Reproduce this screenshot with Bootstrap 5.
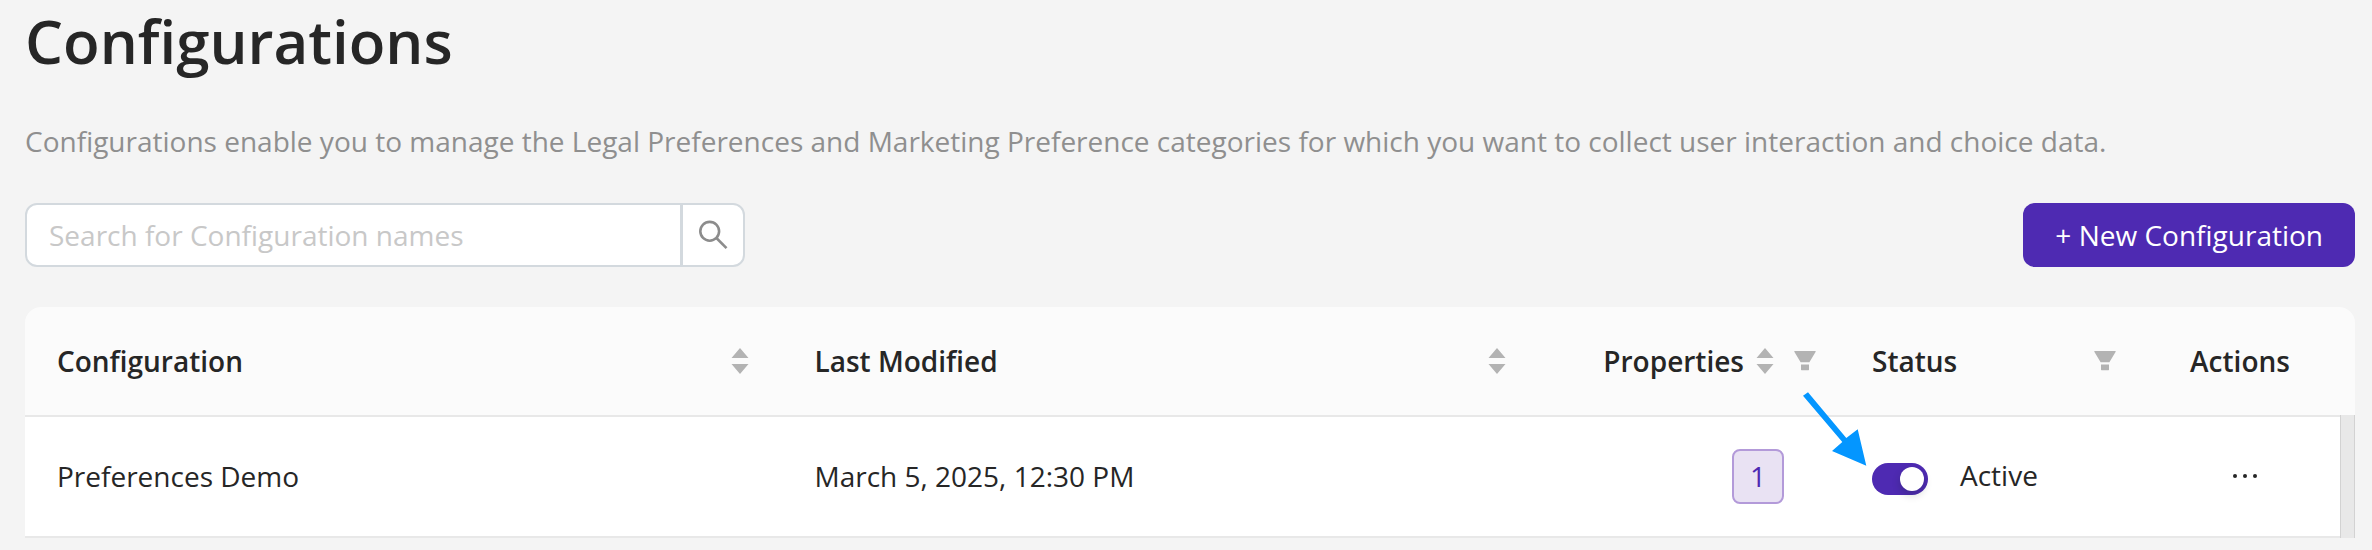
<!DOCTYPE html>
<html lang="en">
<head>
<meta charset="utf-8">
<meta name="viewport" content="width=device-width, initial-scale=1">
<title>Configurations</title>
<link href="https://cdn.jsdelivr.net/npm/bootstrap@5.3.0/dist/css/bootstrap.min.css" rel="stylesheet">
<style>
  body {
    background: #f4f4f4;
    color: #262626;
    font-family: "Open Sans", sans-serif;
    font-size: 28px;
    line-height: 44px;
  }
  .page { padding: 0 17px 12px 25px; }
  .page-title { font-size: 60px; line-height: 82px; font-weight: 600; margin: 0 0 37px; }
  .intro { color: #8f8f8f; margin: 0 0 40px; }
  .toolbar { margin-bottom: 40px; }

  .search-box { width: 720px; max-width: 100%; }
  .search-box .form-control,
  .search-box .btn {
    height: 64px;
    border: 2px solid #d3d9de;
    border-radius: 12px;
    background: #fff;
    color: #262626;
    font-size: 28px;
    line-height: 44px;
  }
  .search-box .form-control { padding: 8px 22px; }
  .search-box .form-control::placeholder { color: #c8c8c8; }
  .search-box .btn { width: 64px; padding: 0; color: #8c8c8c; }
  .btn-create {
    --bs-btn-color: #fff;
    --bs-btn-bg: #4e2ab2;
    --bs-btn-hover-color: #fff;
    --bs-btn-hover-bg: #5f3cc2;
    font-size: 28px;
    line-height: 44px;
    padding: 10px 32px;
    border: 0;
    border-radius: 12px;
  }

  .grid-wrap { border-radius: 16px 16px 0 0; overflow: hidden; }
  .config-table { --bs-table-bg: #fff; table-layout: fixed; color: #262626; margin: 0; }
  .config-table th,
  .config-table td { padding: 32px; border-bottom: 2px solid #e8e8e8; color: #262626; vertical-align: middle; }
  .config-table th { background: #fbfbfb; font-weight: 600; }
  .config-table td { padding-bottom: 34px; }
  .w-status { width: 300px; }
  .w-actions { width: 200px; }
  .config-table .th-sort { padding-right: 34px; }
  .config-table .th-filter { padding-right: 24px; }
  .config-table .td-props { padding: 32px 56px 32px 32px; }
  .config-table .td-actions { padding-left: 42px; }
  .icon-btn { padding: 0; border: 0; line-height: 0; color: #b3b3b3; background: none; }

  .count-tag {
    display: block;
    width: 52px;
    height: 55px;
    line-height: 51px;
    margin-left: auto;
    text-align: center;
    border: 2px solid #b39ad9;
    border-radius: 8px;
    background: #e9e2f3;
    color: #4e2ab2;
    text-decoration: none;
  }
  .status-switch { padding: 0; min-height: 0; gap: 32px; }
  .status-switch .form-check-input {
    appearance: none;
    width: 56px;
    height: 32px;
    margin: 8px 0 0;
    border: 0;
    border-radius: 16px;
    background: #4e2ab2;
    display: flex;
    align-items: center;
    justify-content: flex-end;
    padding: 4px;
  }
  .status-switch .form-check-input::before {
    content: "";
    width: 24px;
    height: 24px;
    border-radius: 12px;
    background: #fff;
    box-shadow: 0 4px 8px rgba(0, 35, 11, .2);
  }
  .pointer-arrow { position: absolute; left: -37px; top: -25px; z-index: 2; pointer-events: none; }
  .more-btn { color: #262626; }

  .rail { width: 15px; }
  .rail-head { height: 108px; background: #fbfbfb; }
  .rail-track { background: #e8e8e8; border: solid #d2d2d2; border-width: 0 1px; }
</style>
</head>
<body>
<main class="page">
  <h1 class="page-title">Configurations</h1>
  <p class="intro">Configurations enable you to manage the Legal Preferences and Marketing Preference categories for which you want to collect user interaction and choice data.</p>

  <div class="toolbar d-flex justify-content-between align-items-center gap-4">
    <form class="search-box input-group" role="search">
      <input type="search" class="form-control" placeholder="Search for Configuration names" aria-label="Search for Configuration names">
      <button type="button" class="btn" aria-label="Search">
        <svg class="d-block mx-auto" width="32" height="32" viewBox="0 0 32 32" fill="none" stroke="currentColor" stroke-width="2.600"><circle cx="12.700" cy="12.300" r="9.400"/><path d="M19.400 19 29.500 29.200"/></svg>
      </button>
    </form>
    <button type="button" class="btn btn-create flex-shrink-0">+ New Configuration</button>
  </div>

  <svg class="d-none">
    <symbol id="sorter" viewBox="0 0 18 26"><path fill="currentColor" d="M9 0 17.500 10H.5zM.5 16h17L9 26z"/></symbol>
    <symbol id="filter" viewBox="0 0 22 20"><path fill="currentColor" d="M.8 0h20.400q.8 0 .5.700L15.400 11.200H6.600L.3.700Q0 0 .8 0zM7 13.400h8v5.200q0 .6-.6.600H7.600q-.6 0-.6-.6z"/></symbol>
  </svg>

  <div class="grid-wrap d-flex">
    <table class="table config-table">
      <colgroup><col><col><col class="w-status"><col class="w-status"><col class="w-actions"></colgroup>
      <thead>
        <tr>
          <th scope="col" class="th-sort"><div class="d-flex align-items-center justify-content-between">Configuration
            <button class="icon-btn" aria-label="Sort by configuration"><svg width="18" height="26"><use href="#sorter"/></svg></button></div></th>
          <th scope="col" class="th-sort"><div class="d-flex align-items-center justify-content-between">Last Modified
            <button class="icon-btn" aria-label="Sort by last modified"><svg width="18" height="26"><use href="#sorter"/></svg></button></div></th>
          <th scope="col" class="th-filter"><div class="d-flex align-items-center justify-content-end">Properties
            <button class="icon-btn ms-2 me-3 ps-1 pe-1" aria-label="Sort by properties"><svg width="18" height="26"><use href="#sorter"/></svg></button>
            <button class="icon-btn" aria-label="Filter properties"><svg width="22" height="20"><use href="#filter"/></svg></button></div></th>
          <th scope="col" class="th-filter"><div class="d-flex align-items-center justify-content-between">Status
            <button class="icon-btn" aria-label="Filter status"><svg width="22" height="20"><use href="#filter"/></svg></button></div></th>
          <th scope="col" class="text-center">Actions</th>
        </tr>
      </thead>
      <tbody>
        <tr>
          <td>Preferences Demo</td>
          <td>March 5, 2025, 12:30 PM</td>
          <td class="td-props"><a href="#" class="count-tag">1</a></td>
          <td class="position-relative">
            <div class="form-check form-switch status-switch d-flex align-items-center">
              <input class="form-check-input" type="checkbox" role="switch" id="demo-status" checked>
              <label class="form-check-label" for="demo-status">Active</label>
            </div>
            <svg class="pointer-arrow" width="64" height="74" viewBox="0 0 64 74" aria-hidden="true"><path fill="#0496ff" d="M0 3.700 5 .3 43.300 46 54.700 37.300 63.300 73.700 29 59 39.300 50z"/></svg>
          </td>
          <td class="td-actions">
            <button class="icon-btn more-btn d-block mx-auto" aria-label="More actions"><svg width="26" height="6" viewBox="0 0 26 6" fill="currentColor"><circle cx="3" cy="3" r="2"/><circle cx="13" cy="3" r="2"/><circle cx="23" cy="3" r="2"/></svg></button>
          </td>
        </tr>
      </tbody>
    </table>
    <div class="rail flex-shrink-0 d-flex flex-column">
      <div class="rail-head"></div>
      <div class="rail-track flex-grow-1"></div>
    </div>
  </div>
</main>
<script src="https://cdn.jsdelivr.net/npm/bootstrap@5.3.0/dist/js/bootstrap.bundle.min.js"></script>
</body>
</html>
